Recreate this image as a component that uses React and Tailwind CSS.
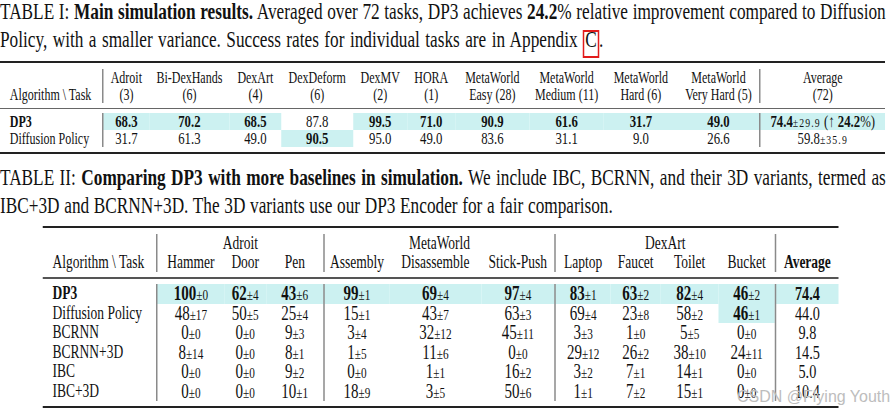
import React from "react";

const HL = "bg-[#ccf1f1]";
const SEP = "border-l-2 border-[#8a8a8a]";

const t1Heads = [
  ["Adroit", "(3)"],
  ["Bi-DexHands", "(6)"],
  ["DexArt", "(4)"],
  ["DexDeform", "(6)"],
  ["DexMV", "(2)"],
  ["HORA", "(1)"],
  ["MetaWorld", "Easy (28)"],
  ["MetaWorld", "Medium (11)"],
  ["MetaWorld", "Hard (6)"],
  ["MetaWorld", "Very Hard (5)"],
  ["Average", "(72)"],
];

const t1DP3 = ["68.3", "70.2", "68.5", "87.8", "99.5", "71.0", "90.9", "61.6", "31.7", "49.0"];
const t1DP = ["31.7", "61.3", "49.0", "90.5", "95.0", "49.0", "83.6", "31.1", "9.0", "26.6"];

const T1COLS = "grid grid-cols-[136px_63px_107px_69px_96px_72px_64px_99px_99px_99px_108px_168px]";
const T2COLS = "grid grid-cols-[151px_91px_56px_76px_88px_123px_97px_75px_67px_77px_75px_85px]";

const t2Rows = [
  { name: "DP3", bold: true, hl: true, vals: ["100|0", "62|4", "43|6", "99|1", "69|4", "97|4", "83|1", "63|2", "82|4", "46|2"], avg: "74.4" },
  { name: "Diffusion Policy", vals: ["48|17", "50|5", "25|4", "15|1", "43|7", "63|3", "69|4", "23|8", "58|2", "46|1"], avg: "44.0", hlIdx: 9 },
  { name: "BCRNN", vals: ["0|0", "0|0", "9|3", "3|4", "32|12", "45|11", "3|3", "1|0", "5|5", "0|0"], avg: "9.8" },
  { name: "BCRNN+3D", vals: ["8|14", "0|0", "8|1", "1|5", "11|6", "0|0", "29|12", "26|2", "38|10", "24|11"], avg: "14.5" },
  { name: "IBC", vals: ["0|0", "0|0", "9|2", "0|0", "1|1", "16|2", "3|2", "7|1", "14|1", "0|0"], avg: "5.0" },
  { name: "IBC+3D", vals: ["0|0", "0|0", "10|1", "18|9", "3|5", "50|6", "1|1", "7|2", "15|1", "0|0"], avg: "10.4" },
];

const t2SepIdx = [0, 3, 6];

function PM({ v, bold }) {
  const [m, s] = v.split("|");
  return (
    <span>
      <span className={bold ? "font-bold" : ""}>{m}</span>
      <span className="text-[15px]">±{s}</span>
    </span>
  );
}

function Table1() {
  return (
    <div className="w-[1180px] mt-[8px] text-[16px] leading-[17px]">
      <div className={`${T1COLS} border-t-2 border-[#222] pt-[6px] pb-[5px] border-b-[1.5px] border-b-[#666]`}>
        <div className="flex items-end pl-[13px] h-[34px]">Algorithm \ Task</div>
        {t1Heads.map((h, i) => (
          <div key={i} className={`text-center h-[34px] ${i === 0 || i === 10 ? SEP : ""}`}>
            <div>{h[0]}</div>
            <div>{h[1]}</div>
          </div>
        ))}
      </div>
      <div className="pt-[4px] pb-[5px] border-b-2 border-[#222]">
        <div className={T1COLS}>
          <div className="pl-[13px] h-[17px] font-bold">DP3</div>
          {t1DP3.map((v, i) => (
            <div
              key={i}
              className={`h-[17px] text-center text-[17px] ${i === 3 ? "" : "font-bold " + HL} ${i === 0 ? SEP : ""}`}
            >
              {v}
            </div>
          ))}
          <div className={`h-[17px] text-center text-[17px] ${HL} ${SEP} whitespace-nowrap`}>
            <span className="font-bold">74.4</span>
            <span className="text-[13px] tracking-[1.5px]">±29.9</span> (↑ <span className="font-bold">24.2</span>%)
          </div>
        </div>
        <div className={T1COLS}>
          <div className="pl-[13px] h-[17px]">Diffusion Policy</div>
          {t1DP.map((v, i) => (
            <div
              key={i}
              className={`h-[17px] text-center text-[17px] ${i === 3 ? "font-bold " + HL : ""} ${i === 0 ? SEP : ""}`}
            >
              {v}
            </div>
          ))}
          <div className={`h-[17px] text-center text-[17px] ${SEP}`}>
            59.8<span className="text-[13px] tracking-[1.5px]">±35.9</span>
          </div>
        </div>
      </div>
    </div>
  );
}

function Table2() {
  return (
    <div className="ml-[57px] w-[1061px] mt-[7px] text-[18px] leading-[19px]">
      <div className={`${T2COLS} border-t-2 border-[#222] pt-[6px] pb-[5px] border-b-2 border-b-[#555]`}>
        <div className="col-start-1 row-start-1 row-span-2 flex items-end pl-[13px]">Algorithm \ Task</div>
        <div className={`col-start-2 col-span-3 row-start-1 text-center ${SEP}`}>Adroit</div>
        <div className={`col-start-5 col-span-3 row-start-1 text-center ${SEP}`}>MetaWorld</div>
        <div className={`col-start-8 col-span-4 row-start-1 text-center ${SEP}`}>DexArt</div>
        <div className={`col-start-12 row-start-1 row-span-2 flex items-end justify-center font-bold ${SEP}`}>
          Average
        </div>
        {["Hammer", "Door", "Pen", "Assembly", "Disassemble", "Stick-Push", "Laptop", "Faucet", "Toilet", "Bucket"].map(
          (h, i) => (
            <div
              key={h}
              className={`row-start-2 text-center ${t2SepIdx.includes(i) ? SEP : ""}`}
              style={{ gridColumnStart: i + 2 }}
            >
              {h}
            </div>
          )
        )}
      </div>
      <div className="pt-[5px] pb-[5px] border-b-2 border-[#222]">
        {t2Rows.map((r) => (
          <div key={r.name} className={T2COLS}>
            <div className={`pl-[13px] h-[19.5px] leading-[19.5px] ${r.bold ? "font-bold" : ""}`}>{r.name}</div>
            {r.vals.map((v, i) => {
              const isHl = r.hl || r.hlIdx === i;
              return (
                <div
                  key={i}
                  className={`h-[19.5px] leading-[19.5px] text-center text-[20px] ${isHl ? HL : ""} ${
                    t2SepIdx.includes(i) ? SEP : ""
                  }`}
                >
                  <PM v={v} bold={isHl} />
                </div>
              );
            })}
            <div
              className={`h-[19.5px] leading-[19.5px] text-center text-[19px] ${SEP} ${
                r.hl ? HL + " font-bold" : ""
              }`}
            >
              {r.avg}
            </div>
          </div>
        ))}
      </div>
    </div>
  );
}

export default function App() {
  return (
    <div className="relative w-[891px] h-[412px] overflow-hidden bg-white">
      <div className="w-[1188px] origin-top-left scale-x-[0.75] font-['Liberation_Serif',serif] text-[#111]">
        <div className="w-[1181px] text-[23px] leading-[27.5px] mt-[-2px]">
          <p className="text-justify [text-align-last:justify] [word-spacing:-2px]">
            TABLE I: <b>Main simulation results.</b> Averaged over 72 tasks, DP3 achieves <b>24.2</b>% relative
            improvement compared to Diffusion
          </p>
          <p className="[word-spacing:1.5px]">
            Policy, with a smaller variance. Success rates for individual tasks are in Appendix{" "}
            <span className="inline-block border-2 border-[#e21b1b] leading-[16px] pb-[8px] px-[1px] -mt-[6px] -mb-[6px]">
              C
            </span>
            .
          </p>
        </div>
        <Table1 />
        <div className="w-[1181px] text-[23px] leading-[27.5px] mt-[10px]">
          <p className="text-justify [text-align-last:justify] [word-spacing:-2px]">
            TABLE II: <b>Comparing DP3 with more baselines in simulation.</b> We include IBC, BCRNN, and their 3D
            variants, termed as
          </p>
          <p className="[word-spacing:0.5px]">
            IBC+3D and BCRNN+3D. The 3D variants use our DP3 Encoder for a fair comparison.
          </p>
        </div>
        <Table2 />
      </div>
      <div className="absolute left-[737px] top-[388px] font-['Liberation_Sans',sans-serif] text-[16px] leading-[18px] text-[#bdbdbd] whitespace-nowrap">
        CSDN @Flying Youth
      </div>
    </div>
  );
}
